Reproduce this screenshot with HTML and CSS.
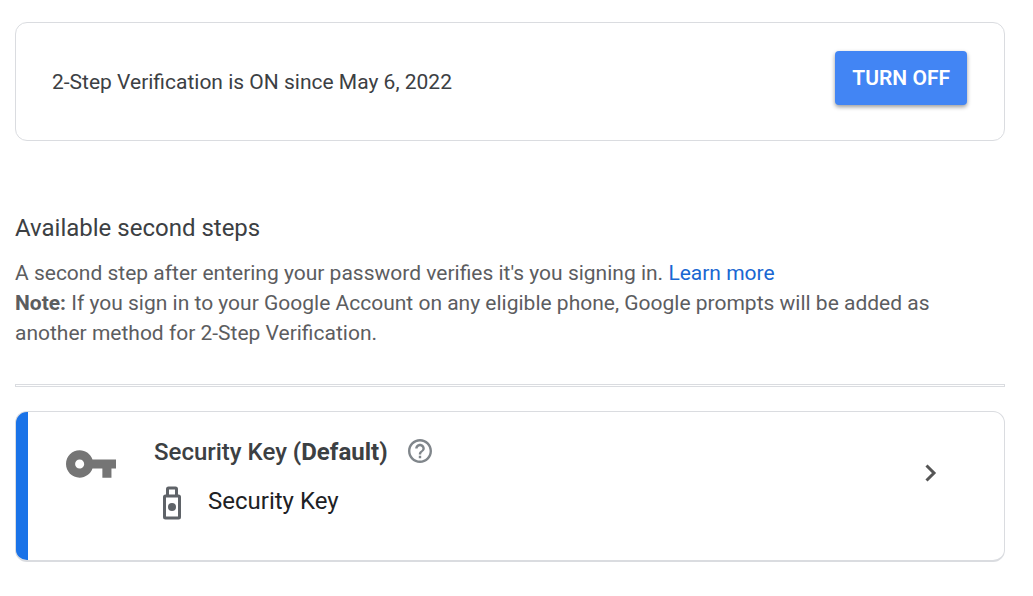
FILE: index.html
```
<!DOCTYPE html>
<html lang="en">
<head>
    <meta charset="utf-8">
    <meta name="viewport" content="width=device-width, initial-scale=1">
    <title>2-Step Verification</title>
    <link rel="stylesheet" href="styles.css">
</head>
<body>
    <main>
        <section class="card status">
            <p>2-Step Verification is ON since May 6, 2022</p>
            <button class="turn-off" type="button">TURN OFF</button>
        </section>

        <section class="intro">
            <h2>Available second steps</h2>
            <p>A second step after entering your password verifies it's you signing in. <a href="#">Learn more</a></p>
            <p><b>Note:</b> If you sign in to your Google Account on any eligible phone, Google prompts will be added as another method for 2-Step Verification.</p>
        </section>

        <hr>

        <section class="card method">
            <svg class="key" viewBox="1 6 22 12" aria-hidden="true"><path d="M12.65 10C11.83 7.67 9.61 6 7 6c-3.31 0-6 2.69-6 6s2.69 6 6 6c2.61 0 4.83-1.67 5.65-4H17v4h4v-4h2v-4H12.65zM7 14c-1.1 0-2-.9-2-2s.9-2 2-2 2 .9 2 2-.9 2-2 2z"/></svg>
            <div class="details">
                <div class="title">
                    <h3>Security Key <b>(Default)</b></h3>
                    <button class="help" type="button" aria-label="Help">
                        <svg viewBox="2 2 20 20"><path d="M11 18h2v-2h-2v2zm1-16C6.48 2 2 6.48 2 12s4.48 10 10 10 10-4.48 10-10S17.52 2 12 2zm0 18c-4.41 0-8-3.59-8-8s3.59-8 8-8 8 3.59 8 8-3.59 8-8 8zm0-14c-2.21 0-4 1.79-4 4h2c0-1.1.9-2 2-2s2 .9 2 2c0 2-3 1.75-3 5h2c0-2.25 3-2.5 3-5 0-2.21-1.79-4-4-4z"/></svg>
                    </button>
                </div>
                <div class="device">
                    <svg class="usb" viewBox="0 0 20 34" aria-hidden="true">
                        <path d="M5.500 10V3q0-1 1-1h7q1 0 1 1v7"/>
                        <rect x="2.500" y="10" width="15" height="22" rx="1"/>
                        <circle cx="10" cy="21" r="4"/>
                    </svg>
                    <span>Security Key</span>
                </div>
            </div>
            <button class="open" type="button" aria-label="Open Security Key">
                <svg viewBox="0 0 12 18"><path d="M1.500 1.500L9 9l-7.500 7.500"/></svg>
            </button>
        </section>
    </main>
</body>
</html>
```
FILE: styles.css
```
*{
    box-sizing: border-box;
}
body{
    margin: 0;
    background: #fff;
    color: #3c4043;
    font-family: Roboto, "Liberation Sans", sans-serif;
    font-size: 21px;
    line-height: 30px;
}
main{
    padding: 22px 28px 36px 15px;
}
h2,h3,p{
    margin: 0;
    font-weight: 400;
}
svg{
    display: block;
}
button{
    border: 0;
    padding: 0;
    background: none;
    font-family: inherit;
    cursor: pointer;
}
.card{
    display: flex;
    border: 1px solid #dadce0;
    border-radius: 12px;
}
.status{
    justify-content: space-between;
    align-items: flex-start;
    padding: 28px 37px 35px 36px;
}
.status p{
    padding-top: 16px;
}
.turn-off{
    padding: 12px 17px;
    border-radius: 4px;
    background: #4285f4;
    color: #fff;
    font-size: 21px;
    font-weight: 600;
    line-height: 30px;
    box-shadow: 0 2px 4px rgba(0,0,0,.4);
}
.intro{
    padding-top: 71px;
}
.intro h2{
    font-size: 24px;
    line-height: 32px;
    margin-bottom: 14px;
}
.intro p{
    padding-right: 40px;
    color: #5c5d5f;
}
.intro a{
    color: #1967d2;
    text-decoration: none;
}
hr{
    height: 3px;
    margin: 36px 0 24px;
    border: 1px solid #dadce0;
}
.method{
    border-bottom-width: 2px;
    padding: 24px 67px 40px 0;
    background: linear-gradient(to right, #1a73e8 12px, #fff 12px);
}
.key{
    width: 50px;
    height: 28px;
    margin: 14px 38px 0 50px;
    fill: #757575;
}
.details{
    flex: 1;
}
.title{
    display: flex;
    gap: 20px;
}
.title h3{
    font-size: 24px;
    line-height: 32px;
    font-weight: 500;
}
.title b{
    font-weight: 700;
}
.help{
    align-self: flex-start;
    padding-top: 3px;
}
.help svg{
    width: 24px;
    height: 24px;
    fill: #80868b;
}
.device{
    display: flex;
    align-items: flex-end;
    gap: 26px;
    padding: 17px 0 0 8px;
    color: #202124;
    font-size: 24px;
    line-height: 32px;
}
.device span{
    padding-bottom: 3px;
}
.usb{
    width: 20px;
    height: 34px;
    fill: none;
    stroke: #5f6368;
    stroke-width: 3;
}
.usb circle{
    fill: #5f6368;
    stroke: none;
}
.open{
    align-self: flex-start;
    margin-top: 28px;
}
.open svg{
    width: 12px;
    height: 18px;
    fill: none;
    stroke: #555;
    stroke-width: 3;
}
```
